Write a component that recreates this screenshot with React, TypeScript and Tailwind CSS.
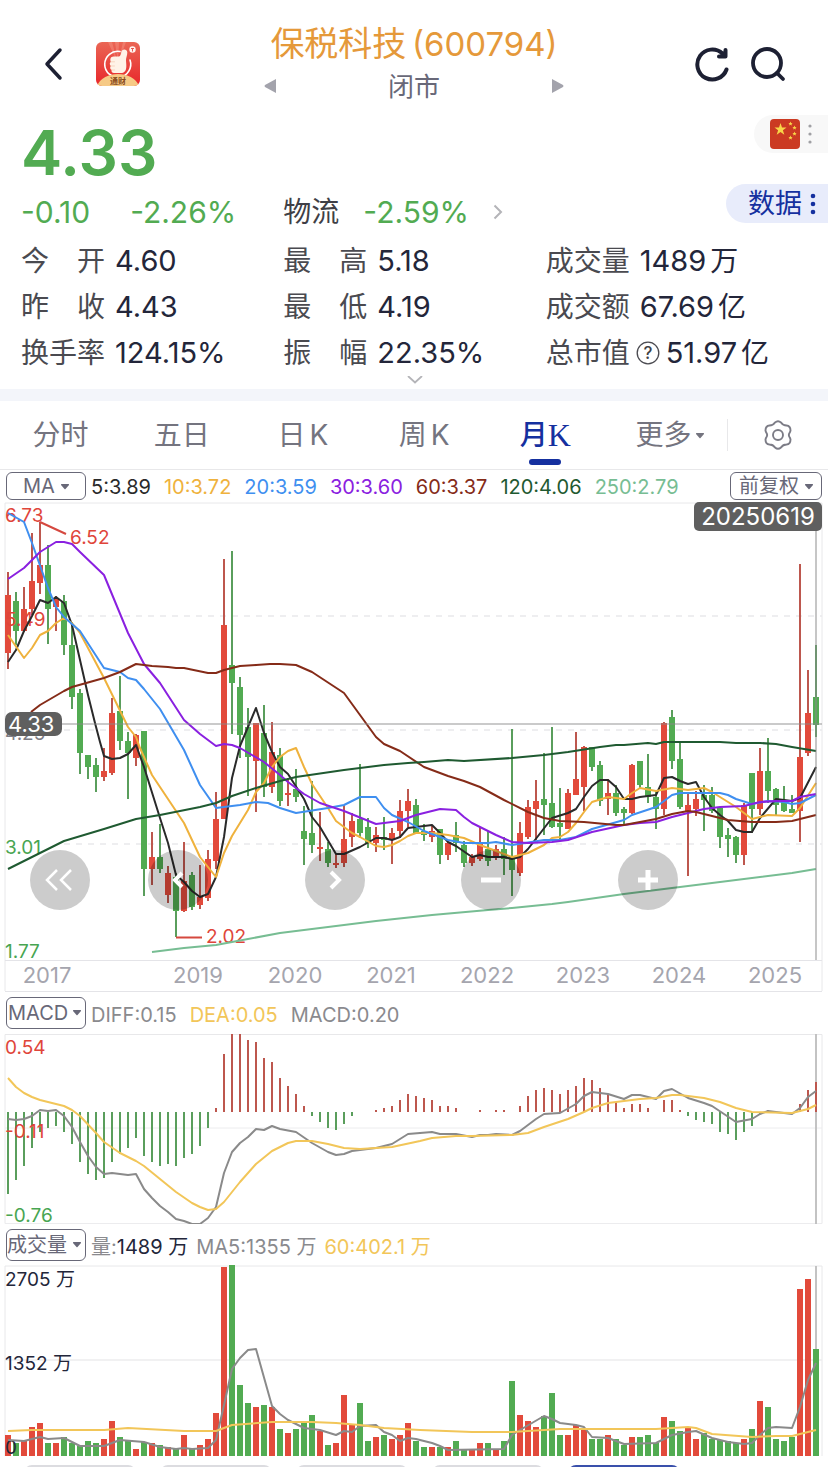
import React from "react";

type Candle = [up: 0 | 1, high: number, top: number, bottom: number, low: number];

const STEP = 8;
const xAt = (i: number) => STEP + i * STEP;

const RED = "#e24a3b";
const GREEN = "#52ab52";
const RED_WICK = "#bd574e";
const GREEN_WICK = "#5a9e5c";

const CANDLES: Candle[] = [
  [1, 572, 595, 653, 669], [0, 592, 601, 631, 645], [1, 587, 609, 631, 632], [1, 533, 581, 609, 615],
  [1, 522, 565, 583, 594], [0, 545, 565, 609, 644], [1, 596, 598, 607, 631], [0, 595, 601, 645, 655],
  [0, 622, 645, 697, 709], [0, 689, 693, 753, 774], [0, 755, 755, 767, 779], [0, 758, 765, 777, 792],
  [1, 748, 771, 777, 781], [1, 698, 713, 773, 775], [0, 676, 711, 741, 750], [0, 732, 741, 753, 799],
  [1, 734, 735, 758, 766], [0, 731, 731, 869, 896], [1, 832, 857, 869, 885], [0, 824, 857, 869, 873],
  [1, 866, 873, 895, 903], [0, 873, 877, 911, 937], [1, 842, 881, 911, 912], [0, 872, 875, 907, 910],
  [1, 865, 897, 905, 909], [1, 850, 859, 898, 901], [1, 792, 819, 861, 869], [1, 559, 625, 819, 819],
  [0, 551, 665, 683, 734], [0, 677, 687, 735, 758], [0, 708, 727, 757, 796], [1, 723, 723, 761, 812],
  [0, 705, 733, 787, 797], [1, 722, 752, 787, 793], [0, 748, 755, 801, 806], [1, 778, 793, 795, 806],
  [0, 769, 789, 797, 802], [0, 806, 831, 839, 865], [0, 781, 833, 845, 853], [1, 812, 847, 849, 861],
  [0, 842, 849, 863, 867], [1, 853, 863, 865, 868], [1, 805, 839, 863, 867], [1, 813, 821, 837, 847],
  [0, 764, 819, 833, 838], [0, 818, 827, 843, 848], [1, 827, 835, 843, 852], [0, 817, 837, 840, 850],
  [1, 828, 833, 840, 864], [1, 800, 811, 831, 838], [1, 789, 801, 811, 827], [0, 799, 805, 833, 833],
  [0, 824, 831, 835, 841], [1, 826, 831, 837, 842], [0, 829, 829, 855, 864], [1, 842, 843, 855, 860],
  [0, 822, 835, 843, 852], [0, 841, 845, 863, 867], [1, 854, 857, 863, 866], [1, 827, 843, 859, 861],
  [0, 831, 849, 861, 866], [1, 845, 849, 858, 860], [0, 837, 849, 859, 875], [0, 729, 857, 870, 896],
  [1, 822, 833, 873, 876], [1, 800, 807, 837, 839], [1, 780, 801, 809, 840], [0, 753, 799, 805, 835],
  [0, 727, 803, 827, 828], [0, 788, 823, 827, 839], [1, 789, 793, 829, 829], [1, 732, 779, 795, 795],
  [1, 746, 747, 787, 811], [0, 747, 747, 767, 771], [0, 761, 765, 801, 806], [1, 779, 793, 799, 815],
  [0, 785, 793, 813, 816], [0, 807, 809, 813, 825], [1, 764, 765, 813, 814], [0, 761, 761, 785, 788],
  [0, 754, 787, 797, 803], [0, 790, 797, 809, 829], [1, 722, 723, 809, 815], [0, 710, 717, 761, 769],
  [0, 743, 759, 807, 809], [1, 792, 805, 811, 876], [1, 791, 799, 809, 816], [0, 785, 795, 800, 831],
  [0, 787, 795, 811, 813], [0, 807, 808, 837, 848], [0, 828, 835, 839, 857], [0, 836, 837, 855, 863],
  [1, 803, 805, 855, 865], [0, 773, 773, 809, 833], [1, 748, 771, 809, 815], [0, 738, 771, 791, 803],
  [0, 788, 789, 805, 815], [0, 786, 801, 811, 812], [0, 795, 809, 813, 813], [1, 564, 757, 811, 842],
  [1, 670, 713, 753, 756], [0, 645, 697, 725, 737],
];

const MA_LINES: { color: string; points: string }[] = [
  {
    color: "#2a2a2a",
    points:
      "8,662 16,650 24,631 32,616 40,600 48,603 56,597 64,603 72,625 80,660 88,695 95,723 100,742 104,756 112,759 120,758 128,754 136,745 144,767 160,818 168,843 176,875 184,882 192,891 200,897 208,894 216,877 224,837 232,778 240,746 248,727 256,708 264,733 272,752 280,767 288,774 304,799 312,817 320,827 336,854 344,854 360,847 376,838 384,838 392,840 400,837 408,828 416,827 432,825 440,833 448,842 456,846 472,857 480,855 488,857 504,857 512,859 520,857 528,849 552,818 568,813 576,809 584,797 592,786 600,780 608,780 616,787 624,799 632,799 640,797 648,796 656,795 664,778 672,777 680,781 688,784 696,782 704,797 712,808 720,815 728,821 736,830 744,832 752,832 760,818 776,799 792,801 800,798 816,767",
  },
  {
    color: "#efb23d",
    points:
      "8,635 24,658 32,648 40,635 48,631 56,623 64,618 72,623 80,633 104,678 128,727 136,737 140,748 152,775 168,799 184,823 200,857 216,877 224,853 232,836 248,810 256,792 264,783 272,767 280,757 288,751 296,748 304,767 312,784 328,808 336,821 352,833 360,837 376,846 384,847 392,845 400,841 408,836 416,833 432,833 448,835 464,838 480,845 496,851 512,857 528,853 544,845 552,838 560,837 568,832 576,823 584,812 592,802 608,797 624,799 632,793 640,788 656,791 672,788 688,790 704,788 712,792 736,807 752,819 768,815 792,816 800,808 816,783",
  },
  {
    color: "#3f8ff0",
    points:
      "8,513 24,522 32,543 48,588 56,607 64,617 80,631 104,668 120,672 128,678 136,680 144,689 160,709 184,750 200,785 216,808 240,805 256,802 268,803 280,808 296,813 328,808 344,805 360,797 376,797 384,808 392,815 408,822 424,831 448,840 464,843 488,843 496,842 512,845 544,840 560,840 576,837 592,829 624,820 632,815 656,807 672,795 680,793 704,793 720,793 728,795 736,799 752,804 768,801 784,802 792,804 800,803 816,795",
  },
  {
    color: "#8a20e0",
    points:
      "8,579 24,568 40,552 56,542 64,542 72,544 80,552 104,575 128,633 144,664 160,683 184,720 200,734 216,746 224,744 232,745 240,748 264,762 280,775 288,782 304,794 320,803 344,811 376,824 400,821 416,815 432,811 440,809 456,810 464,817 472,823 496,835 512,842 528,843 552,842 568,840 592,832 624,825 640,823 656,822 672,817 688,813 704,809 720,807 744,806 760,802 776,801 792,801 800,797 816,794",
  },
  {
    color: "#852b18",
    points:
      "31,712 40,705 64,691 72,687 104,678 120,672 136,664 152,666 168,667 176,668 184,668 208,673 216,673 224,670 240,666 256,665 270,664 280,664 296,665 312,672 344,693 352,704 376,737 384,744 400,751 424,767 448,776 464,781 480,787 504,800 528,812 544,818 560,821 584,822 616,825 624,825 656,819 672,814 688,811 696,812 712,816 728,820 752,822 776,822 792,821 800,819 816,815",
  },
  {
    color: "#1f5a31",
    points:
      "8,869 32,857 64,841 104,829 136,819 160,815 200,807 216,803 232,796 256,788 280,781 296,777 344,770 384,765 408,763 424,762 448,760 464,761 512,758 544,755 552,754 568,752 600,747 616,745 624,745 648,743 656,744 664,742 672,742 688,742 720,742 736,743 760,743 776,744 792,747 816,751",
  },
  {
    color: "#77bd93",
    points:
      "152,952 184,948 216,945 232,942 280,933 296,931 344,925 376,921 432,915 488,910 512,908 552,904 568,902 624,894 680,887 728,881 792,873 816,869",
  },
];

const MACD_ZERO = 1112;
// End of each histogram bar; null where the bar has no height.
const MACD_BARS: (number | null)[] = [
  1194, 1180, 1166, 1148, 1132, 1128, 1126, 1132, 1144, 1162, 1174, 1180, 1178, 1162, 1154, 1148, 1138,
  1156, 1162, 1166, 1164, 1166, 1158, 1154, 1146, 1128, 1108, 1054, 1034, 1034, 1040, 1042, 1058, 1062,
  1078, 1086, 1094, 1106, 1116, 1122, 1128, 1130, 1124, 1116, null, null, 1110, 1108, 1106, 1100, 1094,
  1096, 1098, 1100, 1106, 1106, 1108, null, null, 1110, null, 1110, 1110, null, 1106, 1096, 1090, 1088,
  1090, 1094, 1090, 1086, 1078, 1080, 1088, 1094, 1102, 1108, 1104, 1104, 1108, null, 1100, 1100, 1110,
  1116, 1120, 1122, 1124, 1132, 1134, 1140, 1132, 1126, 1114, 1110, null, null, 1114, 1104, 1090, 1082,
];

const DIFF_POINTS =
  "8,1119 16,1120 24,1119 32,1116 40,1110 48,1111 56,1110 64,1116 72,1127 80,1142 88,1156 96,1167 104,1174 112,1173 128,1175 136,1174 144,1189 152,1198 160,1206 168,1212 176,1219 184,1221 192,1224 200,1224 208,1218 216,1207 224,1173 232,1152 240,1143 248,1137 256,1129 264,1130 272,1126 280,1129 296,1132 312,1143 328,1152 336,1155 344,1154 352,1151 360,1150 376,1148 392,1144 408,1134 432,1132 440,1134 456,1134 472,1137 480,1135 488,1135 496,1134 512,1135 520,1131 536,1119 544,1114 560,1113 576,1104 584,1096 592,1092 608,1094 624,1099 632,1095 640,1095 656,1099 664,1091 672,1089 688,1098 704,1103 712,1106 736,1122 752,1119 760,1114 768,1111 792,1114 800,1108 808,1097 816,1091";
const DEA_POINTS =
  "8,1078 16,1087 24,1093 32,1097 40,1100 64,1106 72,1110 80,1116 96,1133 104,1142 120,1153 128,1157 136,1161 144,1166 160,1179 176,1192 192,1203 200,1207 208,1210 216,1209 224,1202 240,1182 256,1164 272,1151 288,1143 296,1141 312,1141 328,1144 344,1148 360,1149 392,1147 420,1141 432,1138 456,1136 472,1136 512,1135 528,1133 544,1127 568,1119 584,1112 592,1108 608,1103 624,1101 640,1099 656,1098 672,1095 680,1095 704,1098 720,1102 736,1108 752,1112 792,1113 800,1111 808,1109 816,1105";

const VOLUME_TOPS: number[] = [
  1435, 1443, 1441, 1427, 1423, 1443, 1443, 1437, 1443, 1446, 1441, 1443, 1439, 1421, 1437, 1441, 1449,
  1442, 1443, 1445, 1447, 1449, 1435, 1449, 1445, 1439, 1413, 1267, 1265, 1385, 1403, 1407, 1405, 1407,
  1429, 1433, 1429, 1423, 1415, 1431, 1445, 1443, 1395, 1424, 1403, 1441, 1437, 1435, 1439, 1435, 1423,
  1441, 1447, 1447, 1447, 1447, 1441, 1449, 1450, 1443, 1443, 1449, 1441, 1381, 1415, 1421, 1427, 1416,
  1393, 1435, 1435, 1425, 1429, 1439, 1439, 1435, 1439, 1445, 1437, 1437, 1435, 1443, 1417, 1421, 1431,
  1427, 1439, 1433, 1439, 1440, 1441, 1443, 1439, 1429, 1401, 1407, 1439, 1441, 1437, 1289, 1279, 1349,
];
const VOLUME_UP = [
  1, 0, 1, 1, 1, 0, 1, 0, 0, 0, 0, 0, 1, 1, 0, 0, 1, 0, 1, 0, 1, 0, 1, 0, 1, 1, 1, 1, 0, 0, 0, 1, 0, 1, 0,
  1, 0, 0, 0, 1, 0, 1, 1, 1, 0, 0, 1, 0, 1, 1, 1, 0, 0, 1, 0, 1, 0, 0, 1, 1, 0, 1, 0, 0, 1, 1, 1, 0, 0, 0,
  1, 1, 1, 0, 0, 1, 0, 0, 1, 0, 0, 0, 1, 0, 0, 1, 1, 0, 0, 0, 0, 0, 1, 0, 1, 0, 0, 0, 0, 1, 1, 0,
];

const VOLUME_MA5 =
  "8,1440 24,1441 40,1437 48,1439 64,1438 80,1446 104,1446 120,1440 144,1442 160,1447 176,1449 184,1448 192,1449 208,1448 216,1440 224,1405 232,1369 240,1358 248,1350 256,1349 272,1406 280,1414 288,1420 304,1428 320,1430 336,1435 344,1431 352,1432 360,1426 376,1425 384,1432 392,1435 400,1441 408,1438 416,1439 432,1443 440,1446 448,1450 504,1449 512,1435 520,1430 544,1416 552,1419 560,1423 576,1425 584,1427 592,1437 608,1438 624,1444 656,1443 664,1439 672,1435 688,1432 696,1431 712,1438 728,1442 744,1444 752,1443 760,1435 768,1428 776,1427 792,1428 800,1407 808,1380 816,1363";
const VOLUME_MA60 =
  "8,1431 32,1430 104,1430 128,1428 184,1431 216,1431 232,1425 272,1422 312,1422 336,1423 360,1425 384,1428 420,1430 472,1432 512,1432 544,1430 560,1429 656,1429 688,1427 696,1428 712,1434 752,1437 776,1436 792,1436 808,1432 816,1430";

const YEARS: [string, number][] = [
  ["2017", 47], ["2019", 198], ["2020", 295], ["2021", 391], ["2022", 487], ["2023", 583], ["2024", 679], ["2025", 775],
];

const MA_LEGEND: [string, string][] = [
  ["5:3.89", "text-[#2a2a2a]"],
  ["10:3.72", "text-[#efb23d]"],
  ["20:3.59", "text-[#3f8ff0]"],
  ["30:3.60", "text-[#8a20e0]"],
  ["60:3.37", "text-[#852b18]"],
  ["120:4.06", "text-[#1f5a31]"],
  ["250:2.79", "text-[#77bd93]"],
];

const STATS: { label: string[]; value: string; unit?: string; help?: boolean }[] = [
  { label: ["今", "开"], value: "4.60" },
  { label: ["最", "高"], value: "5.18" },
  { label: ["成", "交", "量"], value: "1489", unit: "万" },
  { label: ["昨", "收"], value: "4.43" },
  { label: ["最", "低"], value: "4.19" },
  { label: ["成", "交", "额"], value: "67.69", unit: "亿" },
  { label: ["换", "手", "率"], value: "124.15%" },
  { label: ["振", "幅"], value: "22.35%" },
  { label: ["总", "市", "值"], value: "51.97", unit: "亿", help: true },
];

function AppLogo() {
  return (
    <svg viewBox="0 0 44 44" className="size-11">
      <defs>
        <linearGradient id="logo-red" x1="0" y1="0" x2="0" y2="1">
          <stop offset="0" stopColor="#ea6655" />
          <stop offset="1" stopColor="#e8262a" />
        </linearGradient>
        <clipPath id="logo-clip">
          <rect width="44" height="44" rx="6" />
        </clipPath>
      </defs>
      <g clipPath="url(#logo-clip)">
        <rect width="44" height="44" fill="url(#logo-red)" />
        <path d="M22 22 12 0h4zM22 22 19 0h4zM22 22 27 0h3z" fill="#f7a08e" opacity=".4" />
        <path d="M24 9.500A13 13 0 1 0 34 18" fill="none" stroke="#fff" strokeWidth="1.600" strokeLinecap="round" />
        <path
          d="M17.500 14.500h5.500c1.500-.5 2-2 2.300-4.500.4-3.500 6-3.500 6 .5 0 3-1.300 5-1.300 7.500 0 2 .5 4 .3 7-.2 4-2.300 6-5.300 6h-7c-2 0-3-1.500-2.300-3-1.800-.7-2-2.700-.8-4-1.500-1-1.500-3.200 0-4.200-1.200-2.200-.4-5.300 2.600-5.300z"
          fill="#fff3e8"
        />
        <path d="M14.900 19.800h3.600M14.900 24h3.600M15.700 28h3" stroke="#f3c9ae" strokeWidth=".7" strokeLinecap="round" />
        <circle cx="36.500" cy="7.500" r="3.200" fill="#fff3ee" />
        <path d="M35 6.500h3M36.500 6.500v3" stroke="#e2483f" strokeWidth=".9" />
        <path d="M1 44c3-8 12-12 21-12s18 4 21 12z" fill="#f6ca86" />
        <text x="22" y="42" textAnchor="middle" fontSize="8" fontWeight="700" fill="#8a4b1d">
          通财
        </text>
      </g>
    </svg>
  );
}

function Caret({ className }: { className: string }) {
  return (
    <svg viewBox="0 0 10 7" className={className} aria-hidden="true">
      <path d="M1 1.500Q1 1 1.500 1h7q.5 0 .5.500v.5L5.500 6q-.5.500-1 0L1 2z" fill="currentColor" />
    </svg>
  );
}

function PillSelect({ label, value, box, caret }: { label: string; value: string; box: string; caret: string }) {
  return (
    <div className="relative shrink-0 text-[#686878]">
      <select
        aria-label={label}
        className={`block appearance-none rounded-md border border-[#686878] bg-white leading-6 outline-none ${box}`}
        defaultValue={value}
      >
        <option>{value}</option>
      </select>
      <Caret className={`pointer-events-none absolute w-2.5 ${caret}`} />
    </div>
  );
}

function Frame({ top, bottom }: { top: number; bottom: number }) {
  return <path d={`M5 ${bottom}V${top}H822V${bottom}`} fill="none" stroke="#e8e8ea" />;
}

function PriceChart() {
  return (
    <svg viewBox="0 502 828 490" className="block h-auto w-full" role="img" aria-label="月K线图">
      <Frame top={503} bottom={991} />
      <path d="M5 960.500H822M5 991.500H822" stroke="#e4e4e8" />
      <path d="M64 616H822M64 730H822M64 844H822" stroke="#e9e9eb" strokeWidth="1.500" strokeDasharray="6 6" />
      <g fontSize="22" fill="#a5a5ae" textAnchor="middle">
        {YEARS.map(([year, x]) => (
          <text key={year} x={x} y="983">
            {year}
          </text>
        ))}
      </g>
      {CANDLES.map(([up, high, top, bottom, low], i) => (
        <g key={i}>
          <path d={`M${xAt(i)} ${high}V${low}`} stroke={up ? RED_WICK : GREEN_WICK} strokeWidth="2" />
          <rect x={xAt(i) - 3} y={top} width="6" height={bottom - top} fill={up ? RED : GREEN} />
        </g>
      ))}
      <g fontSize="19">
        <g fill="#e0453a">
          <text x="5" y="522">6.73</text>
          <text x="5" y="626">5.49</text>
          <text x="70" y="544">6.52</text>
          <text x="206" y="943">2.02</text>
        </g>
        <text x="5" y="740" fill="#7d7d86">4.25</text>
        <text x="5" y="854" fill="#48a552">3.01</text>
        <text x="5" y="958" fill="#48a552">1.77</text>
      </g>
      <path d="M40 522 66 534M176 937.500H202" stroke="#d5483f" strokeWidth="2" fill="none" />
      {MA_LINES.map(({ color, points }) => (
        <polyline key={color} points={points} fill="none" stroke={color} strokeWidth="2" strokeLinejoin="round" />
      ))}
      <path d="M5 724H822M816 503V960" stroke="#8a8a8a" strokeWidth="1.600" opacity=".6" />
      <rect x="5" y="712" width="57" height="24" rx="7" fill="#5f5f5f" />
      <rect x="694" y="502" width="128" height="29" rx="5" fill="#5f5f5f" />
      <g fill="#fff">
        <text x="8" y="732" fontSize="22">4.33</text>
        <text x="758" y="525" fontSize="24" textAnchor="middle">20250619</text>
      </g>
    </svg>
  );
}

const CHART_BUTTONS: { label: string; place: string; icon: React.ReactNode }[] = [
  { label: "快退", place: "left-[30px]", icon: <path d="M27 20 17 30l10 10M41 20 31 30l10 10" strokeWidth="2.500" /> },
  { label: "后退", place: "left-[148px]", icon: <path d="M34 23 27 30l7 7" strokeWidth="4" /> },
  { label: "前进", place: "left-[305px]", icon: <path d="M26 22l8 8-8 8" strokeWidth="4" /> },
  { label: "缩小", place: "left-[461px]", icon: <path d="M20 30h20" strokeWidth="5" /> },
  { label: "放大", place: "left-[618px]", icon: <path d="M20 30h20M30 20v20" strokeWidth="5" /> },
];

function MacdChart() {
  return (
    <svg viewBox="0 1034 828 190" className="block h-auto w-full" role="img" aria-label="MACD">
      <Frame top={1034.5} bottom={1223.5} />
      <path d="M5 1223.500H822M5 1128H822" stroke="#ececee" />
      <path d="M816 1034V1224" stroke="#bdbdbd" strokeWidth="1.800" />
      {MACD_BARS.map((end, i) =>
        end === null ? null : (
          <path
            key={i}
            d={`M${xAt(i)} ${MACD_ZERO}V${end}`}
            stroke={end < MACD_ZERO ? RED_WICK : GREEN_WICK}
            strokeWidth="2"
          />
        ),
      )}
      <g fontSize="19">
        <text x="5" y="1054" fill="#e0453a">0.54</text>
        <text x="5" y="1138" fill="#e0453a">-0.11</text>
        <text x="5" y="1222" fill="#48a552">-0.76</text>
      </g>
      <g fill="none" strokeWidth="2" strokeLinejoin="round">
        <polyline points={DIFF_POINTS} stroke="#8a8a8a" />
        <polyline points={DEA_POINTS} stroke="#f2c659" />
      </g>
    </svg>
  );
}

function VolumeChart() {
  return (
    <svg viewBox="0 1265 828 191" className="block h-auto w-full" role="img" aria-label="成交量">
      <Frame top={1266} bottom={1456} />
      <path d="M5 1360H822" stroke="#ececee" strokeWidth="1.500" />
      <path d="M816 1266V1350" stroke="#bdbdbd" strokeWidth="1.800" />
      {VOLUME_TOPS.map((top, i) => (
        <rect key={i} x={xAt(i) - 3} y={top} width="6" height={1456 - top} fill={VOLUME_UP[i] ? RED : GREEN} />
      ))}
      <g fontSize="19" fill="#23263a">
        <text x="5" y="1286">2705 万</text>
        <text x="5" y="1370">1352 万</text>
        <text x="5" y="1454">0</text>
      </g>
      <g fill="none" strokeWidth="2" strokeLinejoin="round">
        <polyline points={VOLUME_MA5} stroke="#8a8a8a" />
        <polyline points={VOLUME_MA60} stroke="#f2c659" />
      </g>
    </svg>
  );
}

export default function App() {
  return (
    <main className="w-full overflow-hidden bg-white font-['Inter','Noto_Sans_CJK_SC',sans-serif] text-[#23263a]">
      <header className="grid grid-cols-[1fr_300px_1fr] items-center pb-0.5 pt-[22px]">
        <div className="flex items-center gap-7 pl-10">
          <button aria-label="返回" className="flex h-11 w-7 items-center justify-center">
            <svg viewBox="0 0 24 36" className="h-9 w-6" fill="none" stroke="#1d2033" strokeWidth="3.500" strokeLinecap="round" strokeLinejoin="round">
              <path d="M18 4 5 18l13 14" />
            </svg>
          </button>
          <AppLogo />
        </div>
        <div className="flex flex-col items-center">
          <h1 className="whitespace-nowrap text-[34px] leading-[44px] text-[#e5993a]">
            保税科技 <span className="-ml-1 text-[33px]">(600794)</span>
          </h1>
          <div className="flex h-10 w-full items-center justify-between">
            <button aria-label="上一只">
              <svg viewBox="0 0 12 14" className="h-3.5 w-3" fill="#a3a3ac">
                <path d="M12 0v14L1 8q-1-1 0-2z" />
              </svg>
            </button>
            <span className="text-[26px] text-[#686878]">闭市</span>
            <button aria-label="下一只">
              <svg viewBox="0 0 12 14" className="h-3.5 w-3" fill="#a3a3ac">
                <path d="M0 0v14l11-6q1-1 0-2z" />
              </svg>
            </button>
          </div>
        </div>
        <div className="flex items-center justify-end gap-5 pr-[42px]">
          <button aria-label="刷新">
            <svg viewBox="0 0 36 36" className="size-9" fill="none" stroke="#1d2033" strokeWidth="4" strokeLinecap="round">
              <path d="M32.500 23.500A15 15 0 1 1 28.500 7.500" />
              <path d="M31.500 4v6.500h-6.500" strokeLinejoin="round" />
              <path d="M31.500 3.500v8h-8z" fill="#1d2033" stroke="none" />
            </svg>
          </button>
          <button aria-label="搜索">
            <svg viewBox="0 0 36 36" className="size-9" fill="none" stroke="#1d2033" strokeWidth="3.800" strokeLinecap="round">
              <circle cx="17" cy="17" r="14" />
              <path d="m27 27 6 6" />
            </svg>
          </button>
        </div>
      </header>

      <section className="relative pl-[21px] pr-5">
        <p className="text-[62px] font-semibold leading-[90px] text-[#52ab52]">4.33</p>
        <div className="mb-3 grid grid-cols-3 items-center text-[30px] leading-7 text-[#52ab52]">
          <div className="flex gap-10">
            <span>-0.10</span>
            <span>-2.26%</span>
          </div>
          <a href="#sector" className="col-span-2 flex items-center">
            <span className="text-[28px] text-[#3f3f46]">物流</span>
            <span className="ml-6">-2.59%</span>
            <svg viewBox="0 0 10 16" className="ml-6 h-4 w-2.5" fill="none" stroke="#b4b4b8" strokeWidth="2">
              <path d="m1.500 1.500 6.500 6.500-6.500 6.500" />
            </svg>
          </a>
        </div>
        <button
          aria-label="中国市场"
          className="absolute right-0 top-[7px] flex h-[38px] w-[74px] items-center gap-1.5 rounded-l-full bg-[#f8f8f8] pl-4"
        >
          <svg viewBox="0 0 30 30" className="size-[30px]">
            <rect width="30" height="30" rx="4" fill="#cb3a22" />
            <g fill="#f8d648">
              <path d="m10.500 4 1.500 4.500h4.500l-3.600 2.800 1.400 4.500-3.800-2.700-3.800 2.700 1.400-4.500L4.500 8.500H9z" />
              <path d="m20.500 2.500.6 1.400 1.500.1-1.100 1 .4 1.500-1.400-.8-1.300.8.3-1.500-1.100-1 1.500-.1zM24.500 6.500l.6 1.400 1.500.1-1.100 1 .4 1.500-1.400-.8-1.300.8.3-1.500-1.100-1 1.500-.1zM24.500 12.500l.6 1.400 1.500.1-1.100 1 .4 1.500-1.400-.8-1.300.8.3-1.500-1.100-1 1.500-.1zM20.500 16.500l.6 1.400 1.500.1-1.100 1 .4 1.500-1.400-.8-1.300.8.3-1.500-1.100-1 1.500-.1z" />
            </g>
          </svg>
          <svg viewBox="0 0 8 22" className="h-[22px] w-2" fill="#a0a0a4">
            <circle cx="4" cy="3" r="1.600" />
            <circle cx="4" cy="11" r="1.600" />
            <circle cx="4" cy="19" r="1.600" />
          </svg>
        </button>
        <button className="absolute right-0 top-[76px] flex h-[39px] items-center gap-1.5 rounded-l-full bg-[#e8ecfb] pl-[22px] pr-2.5 text-[27px] leading-none text-[#15309f]">
          数据
          <svg viewBox="0 0 10 24" className="h-6 w-2.5" fill="#15309f">
            <circle cx="5" cy="4" r="2.300" />
            <circle cx="5" cy="12" r="2.300" />
            <circle cx="5" cy="20" r="2.300" />
          </svg>
        </button>
        <dl className="grid grid-cols-3 text-[29px]">
          {STATS.map(({ label, value, unit, help }) => (
            <div key={label.join("")} className="flex h-[46px] items-center whitespace-nowrap">
              <dt className="flex w-[84px] shrink-0 justify-between text-[28px] text-[#4a4a50]">
                {label.map((c) => (
                  <span key={c}>{c}</span>
                ))}
              </dt>
              {help && (
                <button aria-label="总市值说明" className="ml-1.5">
                  <svg viewBox="0 0 24 24" className="size-6">
                    <circle cx="12" cy="12" r="10.800" fill="none" stroke="#4a4a50" strokeWidth="1.300" />
                    <text x="12" y="18" textAnchor="middle" fontSize="17" fontWeight="500" fill="#3f3f46">
                      ?
                    </text>
                  </svg>
                </button>
              )}
              <dd className={help ? "ml-1.5" : "ml-2.5"}>
                {value}
                {unit && <span className="ml-1 text-[28px]">{unit}</span>}
              </dd>
            </div>
          ))}
        </dl>
        <button aria-label="展开" className="mx-auto flex h-[13px] w-10 justify-center">
          <svg viewBox="0 0 16 8" className="h-2 w-4" fill="none" stroke="#b4b4b8" strokeWidth="1.800">
            <path d="m1 0 7 6.500L15 0" />
          </svg>
        </button>
      </section>

      <div className="h-3 bg-[#f3f5fa]" />

      <nav className="flex h-[69px] items-center border-b border-[#e8e8ea] text-[28px] text-[#74747f]">
        {["分时", "五日", "日K", "周K"].map((tab) => (
          <button key={tab} className="flex h-full flex-1 items-center justify-center">
            {tab.endsWith("K") ? (
              <>
                {tab[0]}
                <span className="ml-1">K</span>
              </>
            ) : (
              tab
            )}
          </button>
        ))}
        <button aria-current="page" className="relative flex h-full flex-1 items-center justify-center font-medium text-[#15309f]">
          月<span className="font-['Liberation_Serif',serif] text-[32px] font-normal">K</span>
          <span className="absolute bottom-1 h-1.5 w-8 rounded-sm bg-[#15309f]" />
        </button>
        <button className="flex h-full flex-1 items-center justify-center">
          <span className="flex items-center gap-1 pl-2">
            更多
            <Caret className="w-2.5" />
          </span>
        </button>
        <div className="flex w-[101px] items-center justify-center border-l border-[#e8e8ea]">
          <button aria-label="设置">
            <svg viewBox="0 0 32 32" className="size-8" fill="none" stroke="#7c7c86" strokeWidth="1.900" strokeLinejoin="round">
              <path d="M13 3.500q3-2.500 6 0 2 3 5.500 3 4 .3 4 5 -.3 1.500-1 2.500-1.300 2 0 4 .7 1 1 2.500 0 4.700-4 5-3.500 0-5.500 3-3 2.500-6 0-2-3-5.500-3-4-.3-4-5 .3-1.500 1-2.500 1.300-2 0-4-.7-1-1-2.500 0-4.700 4-5 3.500 0 5.500-3z" />
              <circle cx="16" cy="16" r="5" />
            </svg>
          </button>
        </div>
      </nav>

      <div className="flex h-8 items-center justify-between whitespace-nowrap px-1.5 text-xl">
        <div className="flex items-center gap-[5px]">
          <PillSelect label="主图指标" value="MA" box="h-7 w-20 pl-4" caret="right-4 top-[11px]" />
          <div className="flex gap-[13px] pt-0.5">
            {MA_LEGEND.map(([text, color]) => (
              <span key={text} className={color}>
                {text}
              </span>
            ))}
          </div>
        </div>
        <PillSelect label="复权方式" value="前复权" box="h-7 w-[92px] pl-2" caret="right-2 top-[11px]" />
      </div>

      <div className="relative">
        <PriceChart />
        {CHART_BUTTONS.map(({ label, place, icon }) => (
          <button key={label} aria-label={label} className={`absolute top-[348px] size-[60px] rounded-full bg-black/20 ${place}`}>
            <svg viewBox="0 0 60 60" className="size-full" fill="none" stroke="#fff">
              {icon}
            </svg>
          </button>
        ))}
      </div>

      <div className="flex h-[42px] items-center gap-[5px] whitespace-nowrap pl-1.5 text-xl text-[#8a8a8e]">
        <PillSelect label="副图指标" value="MACD" box="h-8 w-20 pl-px" caret="right-1 top-3" />
        <div className="flex gap-[13px] pt-1">
          <span>DIFF:0.15</span>
          <span className="text-[#f2c659]">DEA:0.05</span>
          <span>MACD:0.20</span>
        </div>
      </div>
      <MacdChart />

      <div className="flex h-[41px] items-center gap-[5px] whitespace-nowrap pl-1.5 text-xl text-[#8a8a8e]">
        <PillSelect label="成交量指标" value="成交量" box="h-8 w-20" caret="right-1 top-3" />
        <div className="flex gap-2 pt-1">
          <span className="flex">
            <span>量:</span>
            <span className="text-[#23263a]">1489 万</span>
          </span>
          <span>MA5:1355 万</span>
          <span className="text-[#f2c659]">60:402.1 万</span>
        </div>
      </div>
      <VolumeChart />

      <div className="flex h-[11px] gap-6 overflow-hidden px-6 pt-[9px]" aria-hidden="true">
        <span className="h-10 w-28 rounded-lg bg-[#dcdce0]" />
        <span className="h-10 w-28 rounded-lg bg-[#dcdce0]" />
        <span className="h-10 w-28 rounded-lg bg-[#dcdce0]" />
        <span className="h-10 w-28 rounded-lg bg-[#dcdce0]" />
        <span className="h-10 w-28 rounded-lg bg-[#3a50ab]" />
      </div>
    </main>
  );
}
